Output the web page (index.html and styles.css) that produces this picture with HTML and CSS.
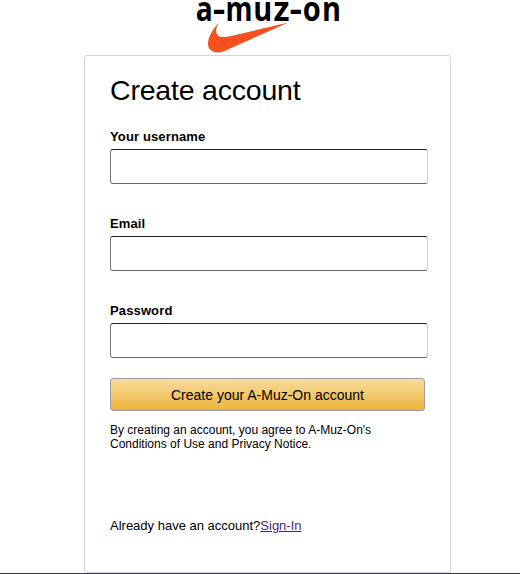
FILE: index.html
```html
<!DOCTYPE html>
<html lang="en">
<head>
<meta charset="utf-8">
<title>Create account</title>
<link rel="stylesheet" href="styles.css">
</head>
<body>
<div class="page">
  <header class="header">
    <svg class="logo" width="160" height="55" viewBox="188 0 160 55" role="img" aria-label="a-muz-on">
      <g class="logo-text">
        <text x="195.700" y="20.500" textLength="17" lengthAdjust="spacingAndGlyphs">a</text>
        <text x="212.800" y="20.500" textLength="12.600" lengthAdjust="spacingAndGlyphs">-</text>
        <text x="225.500" y="20.500" textLength="27" lengthAdjust="spacingAndGlyphs">m</text>
        <text x="253.200" y="20.500" textLength="19" lengthAdjust="spacingAndGlyphs">u</text>
        <text x="273.400" y="20.500" textLength="16" lengthAdjust="spacingAndGlyphs">z</text>
        <text x="289.500" y="20.500" textLength="12.600" lengthAdjust="spacingAndGlyphs">-</text>
        <text x="302.700" y="20.500" textLength="18" lengthAdjust="spacingAndGlyphs">o</text>
        <text x="322" y="20.500" textLength="19" lengthAdjust="spacingAndGlyphs">n</text>
      </g>
      <path class="swoosh" d="M218.700 23C213 29 208.500 36 208 43C207.700 49 212 52.800 218.500 52.500C222 52.200 226 50.500 230 48.500L288.500 22.500L231 36C223 38 217 37.500 216.200 32C215.800 29 217 26.500 218.700 23Z"/>
    </svg>
  </header>
  <main class="card">
    <h1 class="title">Create account</h1>
    <form class="form">
      <label class="label" for="username">Your username</label>
      <input class="input" id="username" type="text">
      <label class="label" for="email">Email</label>
      <input class="input" id="email" type="email">
      <label class="label" for="password">Password</label>
      <input class="input" id="password" type="password">
      <button class="submit" type="button">Create your A-Muz-On account</button>
    </form>
    <p class="legal">By creating an account, you agree to A-Muz-On's<br>Conditions of Use and Privacy Notice.</p>
    <p class="signin">Already have an account?<a class="link" href="#">Sign-In</a></p>
  </main>
</div>
</body>
</html>
```
FILE: styles.css
```css
* {
  box-sizing: border-box;
}

body {
  margin: 0;
  background: #fff;
  color: #000;
  font-family: "Liberation Sans", Arial, sans-serif;
}

.page {
  height: 574px;
  overflow: hidden;
  border-bottom: 1px solid #36384a;
}

.header {
  height: 55px;
  padding-left: 188px;
}

.logo {
  display: block;
  overflow: visible;
}

.logo-text {
  font: bold 34px "Open Sans", sans-serif;
}

.swoosh {
  fill: #f4511e;
}

.card {
  width: 367px;
  height: 518px;
  margin-left: 84px;
  padding: 18px 22px 0 25px;
  border: 1px solid #d5d5d5;
  border-radius: 3px;
}

.title {
  margin: 0 0 22px;
  font-size: 28.500px;
  font-weight: 400;
  line-height: 33px;
  letter-spacing: -0.200px;
}

.form {
  display: flex;
  flex-direction: column;
}

.label {
  height: 20px;
  font-size: 13px;
  font-weight: 700;
  line-height: 15px;
  letter-spacing: 0.13px;
}

.input {
  width: 318px;
  height: 35px;
  margin: 0 0 32px;
  padding: 0 8px;
  border: 1px solid;
  border-color: #222 #ccc #666 #777;
  border-radius: 3px;
  background: #fff;
}

.submit {
  width: 315px;
  height: 33px;
  margin-top: -12px;
  padding: 0;
  border: 1px solid #9c9ea4;
  border-radius: 3px;
  background: linear-gradient(#f7dc9c, #edb43c);
  color: #000;
  font: 14px "Liberation Sans", Arial, sans-serif;
}

.legal {
  margin: 12px 0 67px;
  font-size: 12px;
  line-height: 14px;
}

.signin {
  margin: 0;
  font-size: 13px;
  line-height: 15px;
}

.link {
  color: #4b1d80;
}
```
